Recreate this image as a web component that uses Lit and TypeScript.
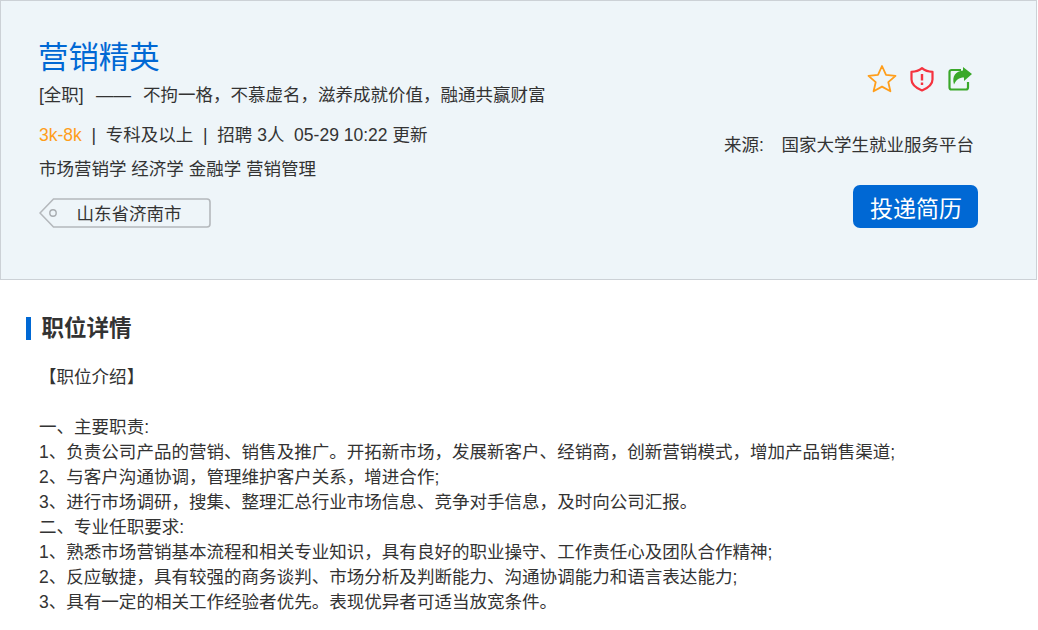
import { LitElement, html, css } from "lit";
import { customElement } from "lit/decorators.js";

@customElement("app-root")
export class AppRoot extends LitElement {
  static styles = css`
    :host { display: block; width: 1038px; height: 630px; overflow: hidden; background: #fff; color: #333;
      font-family: "Liberation Sans", "Noto Sans CJK SC", sans-serif; font-size: 17.5px; }
    .head { box-sizing: border-box; height: 280px; width: 1037px; background: #eef5f9; border: 1px solid #ccd1d6;
      display: flex; justify-content: space-between; padding: 0 58px 0 38px; }
    .left { display: flex; flex-direction: column; align-items: flex-start; }
    h1 { margin: 35px 0 0 -1px; font-size: 30.4px; line-height: 42px; font-weight: 400; color: #0068d4; }
    .sub { margin-top: 3px; line-height: 28px; white-space: pre; }
    .dash { margin: 0 2.4px 0 2.5px; }
    .meta { margin-top: 12px; line-height: 28px; white-space: pre; }
    .salary { color: #ff9e1b; }
    .majors { margin-top: 6px; line-height: 28px; }
    .tag { position: relative; margin-top: 15px; box-sizing: border-box; width: 172px; height: 30px; display: flex; align-items: center; justify-content: center; }
    .tag svg { position: absolute; left: 0; top: 0; }
    .tag span { position: relative; padding-left: 8px; top: -1px; }
    .right { display: flex; flex-direction: column; align-items: flex-end; }
    .icons { display: flex; align-items: center; margin-top: 63px; margin-right: 6px; }
    .star { margin-right: 13px; }
    .shield { margin-right: 14px; }
    .source { margin-top: 37px; margin-right: 4px; line-height: 28px; white-space: pre; word-spacing: 1px; }
    button { margin-top: 26px; width: 125px; height: 43px; border: 0; border-radius: 7px; background: #0068d4; color: #fff;
      font: inherit; font-size: 23px; padding: 0 0 0 1px; }
    .body { padding: 37px 0 0 26px; }
    h2 { margin: 0; border-left: 5px solid #0068d4; padding-left: 10.5px; height: 23px; line-height: 23px; font-size: 22.5px; font-weight: 700; color: #333; }
    .content { margin: 25px 0 0 13px; line-height: 25px; white-space: pre-line; font-size: 17.54px; }
  `;

  render() {
    return html`
      <div class="head">
        <div class="left">
          <h1>营销精英</h1>
          <div class="sub">[全职]  <span class="dash">——</span>  不拘一格，不慕虚名，滋养成就价值，融通共赢财富</div>
          <div class="meta"><span class="salary">3k-8k</span>  |  专科及以上  |  招聘 3人  05-29 10:22 更新</div>
          <div class="majors">市场营销学 经济学 金融学 营销管理</div>
          <div class="tag">
            <svg width="172" height="30" viewBox="0 0 172 30">
              <path d="M14.5 1H168a3 3 0 0 1 3 3v22a3 3 0 0 1-3 3H14.5L1 15z" fill="none" stroke="#b4b8bc" stroke-width="1.6"/>
              <circle cx="14" cy="15" r="3.2" fill="none" stroke="#a8acb0" stroke-width="1.4"/>
            </svg>
            <span>山东省济南市</span>
          </div>
        </div>
        <div class="right">
          <div class="icons">
            <svg class="star" width="30" height="30" viewBox="0 0 30 30">
              <path d="M15 2L19 10.8L28.5 11.8L21.3 18.2L23.4 27.3L15 22.6L6.6 27.3L8.7 18.2L1.5 11.8L11 10.8Z" fill="none" stroke="#ff9e1b" stroke-width="1.8" stroke-linejoin="round"/>
            </svg>
            <svg class="shield" width="24" height="26" viewBox="0 0 24 26">
              <path d="M12 2.2C15 4.7 18.5 5.8 22.5 5.8v7.7c0 5-4.5 8.500-10.500 11C6 22 1.500 18.500 1.500 13.500V5.800c4 0 7.500-1.100 10.500-3.600z" fill="none" stroke="#f5333f" stroke-width="2.200" stroke-linejoin="round"/>
              <path d="M12 8v6.500M12 16.500v2.500" stroke="#f5333f" stroke-width="2.400" fill="none"/>
            </svg>
            <svg width="24" height="24" viewBox="0 0 24 24">
              <path d="M13 3H3.500a2 2 0 0 0-2 2v15.500a2 2 0 0 0 2 2H18a2 2 0 0 0 2-2V15" fill="none" stroke="#3aa82a" stroke-width="2.200"/>
              <path d="M15 0L24 7L16 14V10.500C11 10.500 8 13 6 17.500C3.500 9 8 4 15 3.500Z" fill="#3aa82a"/>
            </svg>
          </div>
          <div class="source">来源:   国家大学生就业服务平台</div>
          <button>投递简历</button>
        </div>
      </div>
      <div class="body">
        <h2>职位详情</h2>
        <div class="content">【职位介绍】

一、主要职责:
1、负责公司产品的营销、销售及推广。开拓新市场，发展新客户、经销商，创新营销模式，增加产品销售渠道;
2、与客户沟通协调，管理维护客户关系，增进合作;
3、进行市场调研，搜集、整理汇总行业市场信息、竞争对手信息，及时向公司汇报。
二、专业任职要求:
1、熟悉市场营销基本流程和相关专业知识，具有良好的职业操守、工作责任心及团队合作精神;
2、反应敏捷，具有较强的商务谈判、市场分析及判断能力、沟通协调能力和语言表达能力;
3、具有一定的相关工作经验者优先。表现优异者可适当放宽条件。</div>
      </div>
    `;
  }
}
